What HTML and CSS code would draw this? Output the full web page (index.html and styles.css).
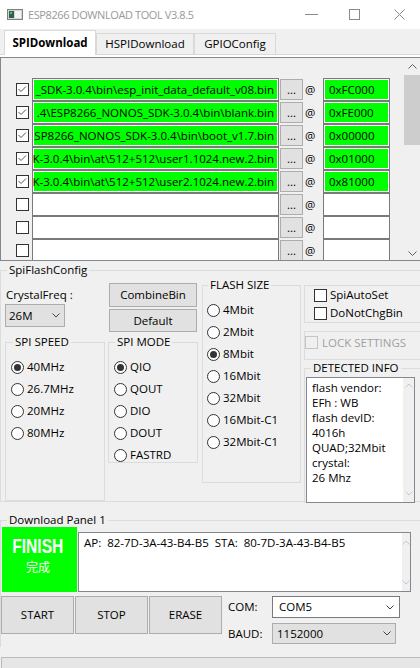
FILE: index.html
```html
<!DOCTYPE html>
<html>
<head>
<meta charset="utf-8">
<title>ESP8266 DOWNLOAD TOOL V3.8.5</title>
<link rel="stylesheet" href="styles.css">
</head>
<body>
<div class="window">
  <div class="titlebar">
    <svg class="appicon" width="16" height="11" viewBox="0 0 16 11">
      <rect x="0.5" y="0.5" width="15" height="10" fill="#d4d4d4" stroke="#808080"/>
      <rect x="2" y="2" width="5" height="7" fill="#2f5f4f"/>
      <rect x="3" y="3" width="2" height="2" fill="#5fc05f"/>
      <rect x="8" y="2" width="6" height="7" fill="#f4f4f4"/>
    </svg>
    <span class="title">ESP8266 DOWNLOAD TOOL V3.8.5</span>
    <div class="controls">
      <svg width="13" height="3" viewBox="0 0 13 3"><path d="M0 1.5H13" stroke="#8a8a8a" stroke-width="1"/></svg>
      <svg class="ctl-max" width="11" height="11" viewBox="0 0 11 11"><rect x="0.5" y="0.5" width="10" height="10" fill="none" stroke="#8a8a8a"/></svg>
      <svg class="ctl-close" width="11" height="11" viewBox="0 0 11 11"><path d="M0.5 0.5L10.5 10.5M10.5 0.5L0.5 10.5" stroke="#8a8a8a" stroke-width="1"/></svg>
    </div>
  </div>

  <div class="tabs">
    <div class="tab active t1">SPIDownload</div>
    <div class="tab t2">HSPIDownload</div>
    <div class="tab t3">GPIOConfig</div>
  </div>

  <div class="page">
    <div class="filelist">
      <div class="rows">
        <div class="row"><span class="cb"><svg width="11" height="11" viewBox="0 0 11 11"><path d="M1.5 5L4 7.5L9 2.5" fill="none" stroke="#555"/></svg></span><div class="path ok"><span>_SDK-3.0.4\bin\esp_init_data_default_v08.bin</span></div><div class="browse">...</div><span class="at">@</span><div class="addr ok">0xFC000</div></div>
        <div class="row"><span class="cb"><svg width="11" height="11" viewBox="0 0 11 11"><path d="M1.5 5L4 7.5L9 2.5" fill="none" stroke="#555"/></svg></span><div class="path ok"><span>.4\ESP8266_NONOS_SDK-3.0.4\bin\blank.bin</span></div><div class="browse">...</div><span class="at">@</span><div class="addr ok">0xFE000</div></div>
        <div class="row"><span class="cb"><svg width="11" height="11" viewBox="0 0 11 11"><path d="M1.5 5L4 7.5L9 2.5" fill="none" stroke="#555"/></svg></span><div class="path ok"><span>SP8266_NONOS_SDK-3.0.4\bin\boot_v1.7.bin</span></div><div class="browse">...</div><span class="at">@</span><div class="addr ok">0x00000</div></div>
        <div class="row"><span class="cb"><svg width="11" height="11" viewBox="0 0 11 11"><path d="M1.5 5L4 7.5L9 2.5" fill="none" stroke="#555"/></svg></span><div class="path ok"><span>K-3.0.4\bin\at\512+512\user1.1024.new.2.bin</span></div><div class="browse">...</div><span class="at">@</span><div class="addr ok">0x01000</div></div>
        <div class="row"><span class="cb"><svg width="11" height="11" viewBox="0 0 11 11"><path d="M1.5 5L4 7.5L9 2.5" fill="none" stroke="#555"/></svg></span><div class="path ok"><span>K-3.0.4\bin\at\512+512\user2.1024.new.2.bin</span></div><div class="browse">...</div><span class="at">@</span><div class="addr ok">0x81000</div></div>
        <div class="row"><span class="cb"></span><div class="path"></div><div class="browse">...</div><span class="at">@</span><div class="addr"></div></div>
        <div class="row"><span class="cb"></span><div class="path"></div><div class="browse">...</div><span class="at">@</span><div class="addr"></div></div>
        <div class="row"><span class="cb"></span><div class="path"></div><div class="browse">...</div><span class="at">@</span><div class="addr"></div></div>
      </div>
      <div class="vscroll">
        <div class="sb-up"><svg width="9" height="5" viewBox="0 0 9 5"><path d="M0.5 4.5L4.5 0.5L8.5 4.5" fill="none" stroke="#606060"/></svg></div>
        <div class="thumb"></div>
        <div class="sb-track"></div>
        <div class="sb-down"><svg width="9" height="5" viewBox="0 0 9 5"><path d="M0.5 0.5L4.5 4.5L8.5 0.5" fill="none" stroke="#606060"/></svg></div>
      </div>
    </div>

    <div class="group spiflash">
      <div class="gtitle">SpiFlashConfig</div>
      <div class="cfg">
        <div class="c1">
          <div class="lbl">CrystalFreq :</div>
          <div class="select gray xtal"><span>26M</span><svg width="8" height="5" viewBox="0 0 8 5"><path d="M0.5 0.5L4 4L7.5 0.5" fill="none" stroke="#444"/></svg></div>
          <div class="group speed">
            <div class="gtitle">SPI SPEED</div>
            <div class="radios">
              <div class="opt"><span class="radio on"></span><span>40MHz</span></div>
              <div class="opt"><span class="radio"></span><span>26.7MHz</span></div>
              <div class="opt"><span class="radio"></span><span>20MHz</span></div>
              <div class="opt"><span class="radio"></span><span>80MHz</span></div>
            </div>
          </div>
        </div>
        <div class="c2">
          <div class="btn combine">CombineBin</div>
          <div class="btn dflt">Default</div>
          <div class="group mode">
            <div class="gtitle">SPI MODE</div>
            <div class="radios">
              <div class="opt"><span class="radio on"></span><span>QIO</span></div>
              <div class="opt"><span class="radio"></span><span>QOUT</span></div>
              <div class="opt"><span class="radio"></span><span>DIO</span></div>
              <div class="opt"><span class="radio"></span><span>DOUT</span></div>
              <div class="opt"><span class="radio"></span><span>FASTRD</span></div>
            </div>
          </div>
        </div>
        <div class="c3">
          <div class="group size">
            <div class="gtitle">FLASH SIZE</div>
            <div class="radios">
              <div class="opt"><span class="radio"></span><span>4Mbit</span></div>
              <div class="opt"><span class="radio"></span><span>2Mbit</span></div>
              <div class="opt"><span class="radio on"></span><span>8Mbit</span></div>
              <div class="opt"><span class="radio"></span><span>16Mbit</span></div>
              <div class="opt"><span class="radio"></span><span>32Mbit</span></div>
              <div class="opt"><span class="radio"></span><span>16Mbit-C1</span></div>
              <div class="opt"><span class="radio"></span><span>32Mbit-C1</span></div>
            </div>
          </div>
        </div>
        <div class="c4">
          <div class="box opts">
            <div class="chk"><span class="cb"></span><span class="chk-text">SpiAutoSet</span></div>
            <div class="chk"><span class="cb"></span><span class="chk-text">DoNotChgBin</span></div>
          </div>
          <div class="box lock">
            <div class="chk dis"><span class="cb"></span><span class="chk-text">LOCK SETTINGS</span></div>
          </div>
          <div class="group detected">
            <div class="gtitle">DETECTED INFO</div>
            <div class="info">
              <div class="info-text">flash vendor:<br>EFh : WB<br>flash devID:<br>4016h<br>QUAD;32Mbit<br>crystal:<br>26 Mhz</div>
              <div class="mini-sb">
                <svg width="8" height="5" viewBox="0 0 8 5"><path d="M0.5 4.5L4 1L7.5 4.5" fill="none" stroke="#c8c8c8"/></svg>
                <svg width="8" height="5" viewBox="0 0 8 5"><path d="M0.5 0.5L4 4L7.5 0.5" fill="none" stroke="#c8c8c8"/></svg>
              </div>
            </div>
          </div>
        </div>
      </div>
    </div>

    <div class="group dlpanel">
      <div class="gtitle">Download Panel 1</div>
      <div class="dl-top">
        <div class="finish"><span class="finish-en">FINISH</span><span class="finish-cn">完成</span></div>
        <div class="log">
          <div class="log-text">AP:  82-7D-3A-43-B4-B5  STA:  80-7D-3A-43-B4-B5</div>
          <div class="mini-sb log-sb">
            <svg width="8" height="5" viewBox="0 0 8 5"><path d="M0.5 4.5L4 1L7.5 4.5" fill="none" stroke="#c8c8c8"/></svg>
            <svg width="8" height="5" viewBox="0 0 8 5"><path d="M0.5 0.5L4 4L7.5 0.5" fill="none" stroke="#c8c8c8"/></svg>
          </div>
        </div>
      </div>
      <div class="dl-bottom">
        <div class="btn act">START</div>
        <div class="btn act">STOP</div>
        <div class="btn act">ERASE</div>
        <div class="port">
          <span class="plbl">COM:</span>
          <div class="select white com"><span>COM5</span><svg width="8" height="5" viewBox="0 0 8 5"><path d="M0.5 0.5L4 4L7.5 0.5" fill="none" stroke="#444"/></svg></div>
          <span class="plbl">BAUD:</span>
          <div class="select gray baud"><span>1152000</span><svg width="8" height="5" viewBox="0 0 8 5"><path d="M0.5 0.5L4 4L7.5 0.5" fill="none" stroke="#444"/></svg></div>
        </div>
      </div>
    </div>

    <div class="progress"></div>
  </div>
</div>
</body>
</html>
```

FILE: styles.css
```css
* { box-sizing: border-box; }
html, body { margin: 0; padding: 0; }
body {
  width: 420px;
  height: 668px;
  overflow: hidden;
  background: #f0f0f0;
  font-family: "Open Sans", "Noto Sans CJK SC", sans-serif;
  font-size: 11.5px;
  line-height: 14px;
  color: #000;
}
.window { width: 420px; height: 668px; overflow: hidden; }

/* title bar */
.titlebar { height: 29px; background: #fff; display: flex; align-items: center; }
.appicon { margin-left: 7px; flex: none; }
.title { margin-left: 5px; color: #999; font-size: 11px; letter-spacing: -0.4px; white-space: nowrap; }
.controls { margin-left: auto; padding-right: 15px; display: flex; align-items: center; }
.ctl-max { margin-left: 31px; }
.ctl-close { margin-left: 34px; }

/* tabs */
.tabs { height: 25px; display: flex; align-items: flex-end; padding-left: 4px; position: relative; z-index: 1; }
.tab { height: 21px; border: 1px solid #d9d9d9; border-bottom: none; background: #f0f0f0; text-align: center; line-height: 20px; white-space: nowrap; }
.tab.active { height: 25px; margin-bottom: -1px; background: #fff; font-weight: bold; line-height: 24px; }
.t1 { width: 92px; }
.t2 { width: 98px; }
.t3 { width: 82px; }

.page { border-top: 1px solid #d9d9d9; padding-top: 2px; background: linear-gradient(#fff 0 2px, transparent 2px); }

/* file list */
.filelist { display: flex; height: 204px; border: 1px solid #828790; border-right: none; }
.rows { flex: 1; padding: 20px 0 0 15px; overflow: hidden; }
.row { display: flex; align-items: center; height: 23px; }
.cb { width: 13px; height: 13px; flex: none; border: 1px solid #333; background: #fff; display: block; }
.cb svg { display: block; }
.path, .addr {
  height: 23px; flex: none;
  border: 1px solid #7a7a7a;
  box-shadow: inset 0 0 0 1px #fff;
  background: #fff;
  line-height: 21px;
  white-space: nowrap;
  overflow: hidden;
}
.path { width: 247px; margin-left: 3px; padding: 0 4px; display: flex; justify-content: flex-end; }
.path span { flex: none; }
.addr { width: 67px; padding-left: 5px; }
.ok { background: #00ff00; }
.browse { width: 23px; height: 21px; flex: none; margin-left: 1px; border: 1px solid #adadad; background: #e1e1e1; text-align: center; line-height: 19px; }
.at { width: 20px; flex: none; padding-left: 2px; }

.vscroll { width: 16px; flex: none; display: flex; flex-direction: column; background: #f0f0f0; }
.sb-up { height: 17px; display: flex; align-items: center; justify-content: center; }
.thumb { height: 70px; background: #cdcdcd; }
.sb-track { flex: 1; }
.sb-down { height: 14px; display: flex; align-items: center; justify-content: center; }

/* group boxes */
.group { border: 1px solid #dcdcdc; }
.gtitle { width: fit-content; margin: -8px 0 0 6px; padding: 0 2px; line-height: 14px; background: #f0f0f0; white-space: nowrap; }

.spiflash { margin-top: 9px; width: 440px; }
.cfg { display: flex; height: 224px; }

.c1 { margin-left: 4px; width: 100px; display: flex; flex-direction: column; }
.lbl { margin-top: 11px; padding-left: 1px; white-space: nowrap; }
.select { display: flex; align-items: center; justify-content: space-between; white-space: nowrap; }
.select svg { flex: none; }
.select.gray { border: 1px solid #adadad; background: #e1e1e1; }
.select.white { border: 1px solid #7a7a7a; background: #fff; }
.xtal { width: 60px; height: 23px; margin-top: 2px; padding: 0 4px 0 3px; }
.speed { margin-top: 15px; flex: 1; }
.speed > .gtitle { margin-left: 7px; }

.radios { padding: 7px 0 0 5px; }
.opt { display: flex; align-items: center; height: 22px; white-space: nowrap; }
.opt span:last-child { margin-left: 3px; }
.radio { width: 13px; height: 13px; flex: none; border: 1px solid #333; border-radius: 50%; background: #fff; display: flex; align-items: center; justify-content: center; }
.radio.on::after { content: ""; width: 7px; height: 7px; border-radius: 50%; background: #333; }

.c2 { margin-left: 3px; width: 90px; display: flex; flex-direction: column; }
.btn { border: 1px solid #adadad; background: #e1e1e1; display: flex; align-items: center; justify-content: center; white-space: nowrap; }
.combine { margin: 6px 0 0 1px; width: 88px; height: 24px; flex: none; }
.dflt { margin: 2px 0 0 1px; width: 88px; height: 23px; flex: none; }
.mode { margin-top: 10px; height: 121px; flex: none; }

.c3 { margin-left: 4px; width: 99px; }
.size { margin-top: 8px; height: 198px; }
.size > .gtitle { margin-left: 5px; }
.size .radios { padding: 7px 0 0 4px; }

.c4 { margin-left: 3px; width: 130px; display: flex; flex-direction: column; }
.box { border: 1px solid #dcdcdc; flex: none; }
.opts { margin-top: 8px; height: 38px; padding-left: 9px; }
.chk { display: flex; align-items: center; height: 18px; white-space: nowrap; }
.chk-text { margin-left: 3px; }
.lock { margin-top: 8px; height: 29px; padding-top: 4px; }
.lock .chk { height: 13px; }
.chk.dis .cb { border-color: #c4c4c4; background: transparent; }
.chk.dis .chk-text { color: #a0a0a0; margin-left: 4px; }
.detected { margin-top: 8px; border-bottom: none; flex: none; }
.info { margin: 2px 0 0 1px; width: 109px; height: 126px; border: 1px solid #828790; background: #fff; display: flex; }
.info-text { flex: 1; padding: 2px 0 0 5px; line-height: 15px; white-space: nowrap; }
.mini-sb { width: 11px; flex: none; background: #f0f0f0; display: flex; flex-direction: column; justify-content: space-between; align-items: center; padding: 5px 0 6px; }

/* download panel */
.dlpanel { margin-top: 18px; width: 440px; border-bottom: none; padding-bottom: 3px; }
.dl-top { display: flex; align-items: flex-start; }
.finish { margin-left: 1px; width: 75px; height: 65px; background: #00ff00; color: #fff; display: flex; flex-direction: column; align-items: center; padding-right: 3px; }
.finish-en { display: inline-block; margin-top: 8px; font-family: "Liberation Sans", sans-serif; font-weight: bold; font-size: 20px; line-height: 22px; transform: scaleX(0.78); }
.finish-cn { margin-top: 2px; font-family: "Noto Sans CJK SC", sans-serif; font-size: 12px; line-height: 16px; }
.log { margin: 5px 0 0 1px; width: 333px; height: 60px; border: 1px solid #828790; background: #fff; display: flex; }
.log-text { flex: 1; padding: 3px 0 0 5px; white-space: pre; }
.log-sb { width: 8px; padding: 7px 0 6px; }

.dl-bottom { display: flex; margin-top: 4px; }
.act { width: 73px; height: 38px; margin-left: 1px; }
.act:first-child { margin-left: 0; }
.port { margin-left: 6px; display: grid; grid-template-columns: 44px auto; row-gap: 5px; align-items: center; align-content: start; }
.plbl { white-space: nowrap; }
.com { width: 128px; height: 22px; padding: 0 5px 0 6px; }
.baud { width: 124px; height: 21px; padding: 0 4px 0 4px; }

.progress { margin: 10px 0 0 1px; width: 440px; height: 16px; border: 1px solid #bcbcbc; background: #e6e6e6; }
```
